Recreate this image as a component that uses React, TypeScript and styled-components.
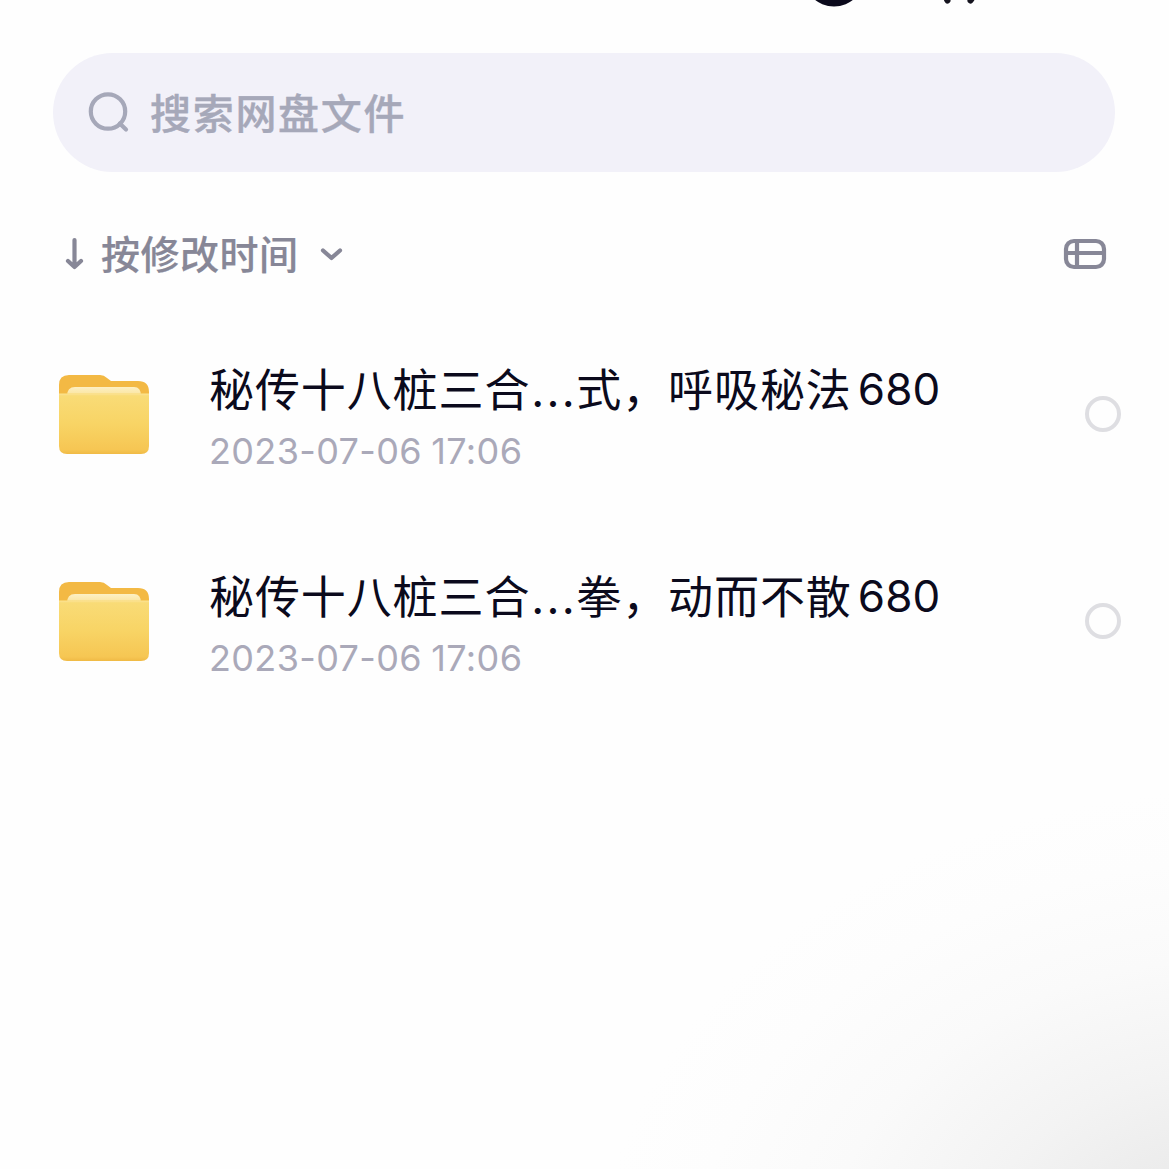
import React from 'react';
import styled, { createGlobalStyle } from 'styled-components';

const GlobalStyle = createGlobalStyle`
  * { box-sizing: border-box; }
  body { margin: 0; background: #fefefe; }
`;

const Screen = styled.main`
  width: 1169px;
  height: 1169px;
  overflow: hidden;
  display: flex;
  flex-direction: column;
  font-family: Inter, "Noto Sans CJK SC", sans-serif;
  background:
    radial-gradient(ellipse 640px 480px at 1240px 1270px,
      #e2e2e2 0%, #ebebeb 22%, #f3f3f3 42%, #fafafa 65%, #fdfdfd 85%, #fefefe 100%);
`;

const TopBar = styled.header`
  height: 53px;
  flex: none;
  padding-left: 800px;
`;

const SearchBar = styled.label`
  flex: none;
  height: 119px;
  margin: 0 54px 0 53px;
  padding-left: 34px;
  border-radius: 60px;
  background: #f2f1f9;
  display: flex;
  align-items: center;
  color: #a6a8b9;
`;

const Placeholder = styled.span`
  margin: 0 0 3px 19px;
  font-size: 41px;
  line-height: 60px;
  font-weight: 500;
  letter-spacing: 1.7px;
  font-family: "Noto Sans CJK SC", sans-serif;
  -webkit-text-stroke: 0.4px currentColor;
`;

const SortBar = styled.div`
  flex: none;
  height: 64px;
  margin-top: 50px;
  padding: 0 62px;
  display: flex;
  align-items: center;
  justify-content: space-between;
  color: #878797;
`;

const SortButton = styled.div`
  display: flex;
  align-items: center;
`;

const SortLabel = styled.span`
  margin: 0 19px 4px 14px;
  font-size: 39px;
  line-height: 56px;
  font-weight: 500;
  letter-spacing: 0.5px;
  font-family: "Noto Sans CJK SC", sans-serif;
  -webkit-text-stroke: 0.2px currentColor;
`;

const FileList = styled.ul`
  list-style: none;
  margin: 24px 0 0;
  padding: 0;
`;

const FileRow = styled.li`
  height: 207px;
  padding: 0 48px 0 54px;
  display: flex;
  align-items: center;
`;

const FileInfo = styled.div`
  flex: 1;
  margin: 4px 0 0 55px;
  display: flex;
  flex-direction: column;
`;

const FileName = styled.div`
  height: 66px;
  display: flex;
  align-items: baseline;
  white-space: nowrap;
  color: #0b0a1c;
  font-size: 45px;
  line-height: 66px;
  letter-spacing: 0.9px;
  font-family: "Noto Sans CJK SC", sans-serif;
`;

const Dots = styled.span`
  width: 46px;
  font-family: Inter, sans-serif;
  letter-spacing: 2.2px;
  padding-left: 1px;
`;

const Price = styled.span`
  margin-left: 6px;
  font-family: Inter, sans-serif;
  font-size: 44px;
  letter-spacing: 0.2px;
  transform: translateY(-2px);
`;

const FileDate = styled.time`
  height: 52px;
  margin-top: 4px;
  color: #aaa9b9;
  font-size: 36px;
  line-height: 52px;
  letter-spacing: 0.35px;
  word-spacing: -1px;
  font-feature-settings: "calt" 0;
  white-space: nowrap;
`;

const Radio = styled.span`
  flex: none;
  width: 36px;
  height: 36px;
  border: 4px solid #dedee2;
  border-radius: 50%;
`;

const TopIcons = () => (
  <svg width="200" height="10" viewBox="800 0 200 10" display="block">
    <circle cx="834" cy="-24" r="30.500" fill="#0b0a1c" />
    <path d="M944-6l3.500 6.500M975-6l-4.500 6.500" stroke="#15141f" strokeWidth="6" strokeLinecap="round" />
  </svg>
);

const SearchIcon = () => (
  <svg width="44" height="44" viewBox="87 90.500 44 44" fill="none" stroke="currentColor" strokeWidth="4.200">
    <circle cx="108" cy="111" r="17.200" />
    <path d="M119.800 123l6.200 6" strokeLinecap="round" />
  </svg>
);

const ArrowDown = () => (
  <svg width="25" height="36" viewBox="62 236 25 36" fill="none" stroke="currentColor" strokeWidth="4.200" strokeLinecap="round" strokeLinejoin="round">
    <path d="M74.500 240v26M68 261l6.500 6 6.500-6" />
  </svg>
);

const Chevron = () => (
  <svg width="28" height="20" viewBox="318 244 28 20" fill="none" stroke="currentColor" strokeWidth="4.200" strokeLinecap="round" strokeLinejoin="round">
    <path d="M323 250.500l8.500 7.500 8.500-7.500" />
  </svg>
);

const LayoutIcon = () => (
  <svg width="44" height="32" viewBox="1063 238 44 32" fill="none" stroke="currentColor" strokeWidth="4.200">
    <rect x="1066" y="241" width="38" height="26" rx="8" />
    <path d="M1066 253h38M1077 241v26" />
  </svg>
);

const FolderIcon = () => (
  <svg width="100" height="90" viewBox="54 369 100 90">
    <defs>
      <linearGradient id="folderFront" x1="0" y1="0" x2="0" y2="1">
        <stop offset="0" stopColor="#f9dc78" />
        <stop offset="0.500" stopColor="#f8d465" />
        <stop offset="0.930" stopColor="#f6c653" />
        <stop offset="1" stopColor="#f0ba45" />
      </linearGradient>
      <linearGradient id="folderPaper" x1="0" y1="0" x2="0" y2="1">
        <stop offset="0" stopColor="#fdf0c4" />
        <stop offset="1" stopColor="#fae39a" />
      </linearGradient>
    </defs>
    <path d="M59 400V385q0-10 10-10h31q4 0 7 3l4 3h27q11 0 11 11v7z" fill="#f3b944" />
    <path d="M67 396q0-9 8-9h59q7 0 7 9z" fill="url(#folderPaper)" />
    <path d="M59 393.500h90v52.500q0 8-8 8H67q-8 0-8-8z" fill="url(#folderFront)" />
    <path d="M59 394.500h90" stroke="#fbe08a" strokeWidth="1.500" />
  </svg>
);

const files = [
  { head: '秘传十八桩三合', tail: '式，呼吸秘法', price: '680', date: '2023-07-06 17:06' },
  { head: '秘传十八桩三合', tail: '拳，动而不散', price: '680', date: '2023-07-06 17:06' },
];

export default function App() {
  return (
    <>
      <GlobalStyle />
      <Screen>
        <TopBar><TopIcons /></TopBar>
        <SearchBar>
          <SearchIcon />
          <Placeholder>搜索网盘文件</Placeholder>
        </SearchBar>
        <SortBar>
          <SortButton>
            <ArrowDown />
            <SortLabel>按修改时间</SortLabel>
            <Chevron />
          </SortButton>
          <LayoutIcon />
        </SortBar>
        <FileList>
          {files.map((file) => (
            <FileRow key={file.tail}>
              <FolderIcon />
              <FileInfo>
                <FileName>
                  <span>{file.head}</span>
                  <Dots>...</Dots>
                  <span>{file.tail}</span>
                  <Price>{file.price}</Price>
                </FileName>
                <FileDate>{file.date}</FileDate>
              </FileInfo>
              <Radio />
            </FileRow>
          ))}
        </FileList>
      </Screen>
    </>
  );
}
